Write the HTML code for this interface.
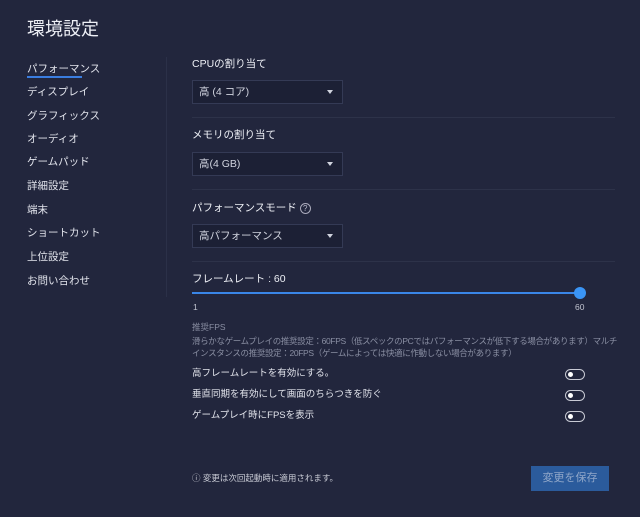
<!DOCTYPE html>
<html><head><meta charset="utf-8"><style>
*{margin:0;padding:0;box-sizing:border-box}
body{width:640px;height:517px;background:#22263d;color:#e6e8f0;font-family:"Liberation Sans","Noto Sans CJK JP",sans-serif;position:relative;overflow:hidden}
.a{position:absolute;white-space:nowrap}
.t{left:27px;top:15px;font-size:18px;color:#eef0f6}
.nav{left:27px;font-size:10.5px;color:#e2e4ec;line-height:14px}
.lbl{left:192px;font-size:10.5px;color:#eef0f6;line-height:14px}
.dd{left:192px;width:151px;height:24px;background:#1c2035;border:1px solid #343a55;font-size:10.5px;color:#d0d3de;padding-left:6px;line-height:22px}
.dd:after{content:"";position:absolute;right:9px;top:9px;border-left:3.5px solid transparent;border-right:3.5px solid transparent;border-top:4px solid #d0d3de}
.sep{left:192px;width:423px;height:1px;background:#2d3249}
.sm{font-size:8.5px;color:#8a8fa3;line-height:12px}
.row{left:192px;font-size:9.5px;color:#e2e4ec;line-height:12px}
.tg{left:565px;width:20px;height:11px;border:1px solid #c8cad4;border-radius:6px}
.tg:after{content:"";position:absolute;left:2px;top:2px;width:5px;height:5px;border-radius:50%;background:#fff}
</style></head><body>
<div class="a t">環境設定</div>
<div class="a nav" style="top:62px">パフォーマンス</div>
<div class="a" style="left:27px;top:76px;width:55px;height:2px;background:#3a7de0"></div>
<div class="a nav" style="top:85px">ディスプレイ</div>
<div class="a nav" style="top:109px">グラフィックス</div>
<div class="a nav" style="top:132px">オーディオ</div>
<div class="a nav" style="top:155px">ゲームパッド</div>
<div class="a nav" style="top:179px">詳細設定</div>
<div class="a nav" style="top:203px">端末</div>
<div class="a nav" style="top:226px">ショートカット</div>
<div class="a nav" style="top:250px">上位設定</div>
<div class="a nav" style="top:274px">お問い合わせ</div>
<div class="a" style="left:166px;top:57px;width:1px;height:240px;background:#2b3048"></div>

<div class="a lbl" style="top:57px">CPUの割り当て</div>
<div class="a dd" style="top:80px">高 (4 コア)</div>
<div class="a sep" style="top:117px"></div>
<div class="a lbl" style="top:128px">メモリの割り当て</div>
<div class="a dd" style="top:152px">高(4 GB)</div>
<div class="a sep" style="top:189px"></div>
<div class="a lbl" style="top:201px">パフォーマンスモード <span style="display:inline-block;width:11px;height:11px;border:1px solid #aab;border-radius:50%;font-size:8px;text-align:center;line-height:9px;color:#bbc">?</span></div>
<div class="a dd" style="top:224px">高パフォーマンス</div>
<div class="a sep" style="top:261px"></div>
<div class="a lbl" style="top:272px">フレームレート : 60</div>
<div class="a" style="left:192px;top:292px;width:388px;height:2px;background:#3a86e8"></div>
<div class="a" style="left:574px;top:287px;width:12px;height:12px;border-radius:50%;background:#3a94f5"></div>
<div class="a sm" style="left:193px;top:301px;color:#c0c3cf">1</div>
<div class="a sm" style="left:575px;top:301px;color:#c0c3cf">60</div>
<div class="a sm" style="left:192px;top:321px">推奨FPS</div>
<div class="a sm" style="left:192px;top:335px;letter-spacing:-0.35px">滑らかなゲームプレイの推奨設定：60FPS（低スペックのPCではパフォーマンスが低下する場合があります）マルチ</div>
<div class="a sm" style="left:192px;top:347px;letter-spacing:-0.35px">インスタンスの推奨設定：20FPS（ゲームによっては快適に作動しない場合があります）</div>
<div class="a row" style="top:368px">高フレームレートを有効にする。</div>
<div class="a tg" style="top:369px"></div>
<div class="a row" style="top:389px">垂直同期を有効にして画面のちらつきを防ぐ</div>
<div class="a tg" style="top:390px"></div>
<div class="a row" style="top:410px">ゲームプレイ時にFPSを表示</div>
<div class="a tg" style="top:411px"></div>

<div class="a" style="left:192px;top:472px;font-size:8.5px;color:#c8cad4;line-height:12px">ⓘ 変更は次回起動時に適用されます。</div>
<div class="a" style="left:531px;top:466px;width:78px;height:25px;background:#2b5b9c;color:#8fa6c8;font-size:11px;text-align:center;line-height:25px">変更を保存</div>
</body></html>
